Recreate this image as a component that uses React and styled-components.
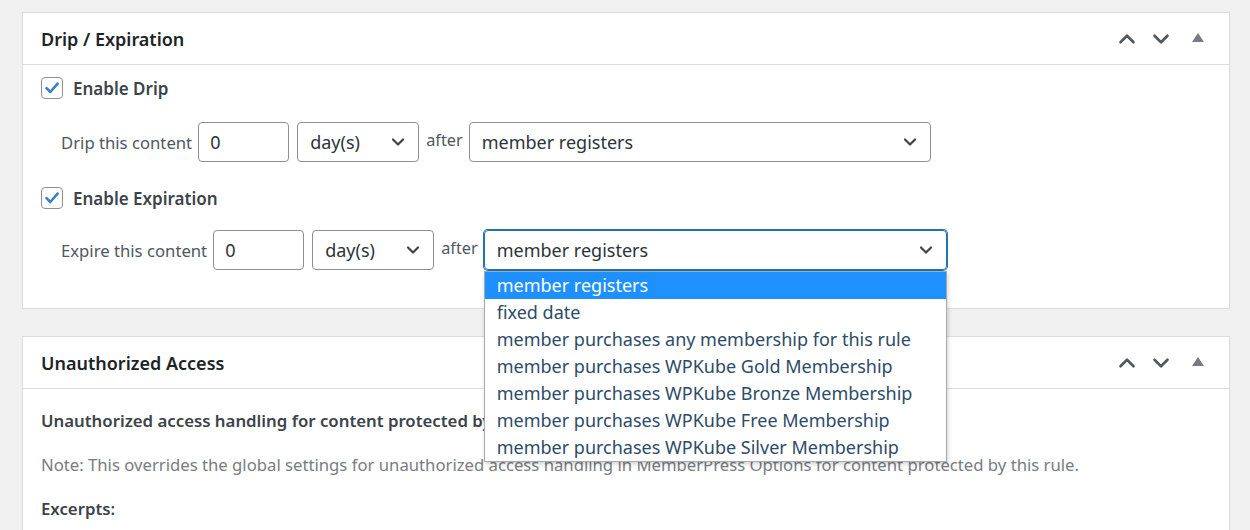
import React from 'react'
import styled, { createGlobalStyle } from 'styled-components'
import { ChevronUp, ChevronDown } from 'lucide-react'

const Global = createGlobalStyle`
  body {
    margin: 0;
    background: #f0f0f1;
    font-family: "Noto Sans", "Open Sans", sans-serif;
    color: #3c434a;
  }
`

const options = [
  'member registers',
  'fixed date',
  'member purchases any membership for this rule',
  'member purchases WPKube Gold Membership',
  'member purchases WPKube Bronze Membership',
  'member purchases WPKube Free Membership',
  'member purchases WPKube Silver Membership',
]

const Check = () => (
  <CheckBox>
    <svg width="16" height="16" viewBox="0 0 16 16">
      <path d="M2.5 8.2 L6.3 12 L13.6 3.6" fill="none" stroke="#3582c4" strokeWidth="2.6" strokeLinecap="round" strokeLinejoin="round" />
    </svg>
  </CheckBox>
)

const Select = ({ value, width, focused, children }) => (
  <SelectBox $width={width} $focused={focused}>
    <span>{value}</span>
    <ChevronDown size={20} strokeWidth={2.6} color="#3c434a" />
    {children}
  </SelectBox>
)

const Header = ({ title }) => (
  <PanelHeader>
    <Title>{title}</Title>
    <Controls>
      <IconBtn><ChevronUp size={26} strokeWidth={2.4} color="#50575e" /></IconBtn>
      <IconBtn><ChevronDown size={26} strokeWidth={2.4} color="#50575e" /></IconBtn>
      <Toggle />
    </Controls>
  </PanelHeader>
)

const App = () => {
  return (
    <>
      <Global />
      <Page>
        <Panel>
          <Header title="Drip / Expiration" />
          <Body>
            <CheckRow>
              <Check />
              <CheckLabel>Enable Drip</CheckLabel>
            </CheckRow>
            <FieldRow>
              <FieldLabel>Drip this content</FieldLabel>
              <NumInput>0</NumInput>
              <Select value="day(s)" width={122} />
              <After>after</After>
              <Select value="member registers" width={462} />
            </FieldRow>
            <CheckRow $top={25}>
              <Check />
              <CheckLabel>Enable Expiration</CheckLabel>
            </CheckRow>
            <FieldRow $top={21}>
              <FieldLabel>Expire this content</FieldLabel>
              <NumInput>0</NumInput>
              <Select value="day(s)" width={122} />
              <After>after</After>
              <Select value="member registers" width={463} focused>
                <DropList>
                  {options.map((o, i) => (
                    <Option key={o} $active={i === 0}>{o}</Option>
                  ))}
                </DropList>
              </Select>
            </FieldRow>
          </Body>
        </Panel>
        <Panel>
          <Header title="Unauthorized Access" />
          <Body2>
            <Strong>Unauthorized access handling for content protected by this rule</Strong>
            <Note>Note: This overrides the global settings for unauthorized access handling in MemberPress Options for content protected by this rule.</Note>
            <Strong>Excerpts:</Strong>
          </Body2>
        </Panel>
      </Page>
    </>
  )
}

export default App

const Page = styled.div`
  padding: 12px 20px 0 22px;
  height: 518px;
  overflow: hidden;
`
const Panel = styled.div`
  background: #fff;
  border: 1px solid #dcdcde;
  margin-bottom: 27px;
`
const PanelHeader = styled.div`
  height: 51px;
  border-bottom: 1px solid #dcdcde;
  display: flex;
  align-items: center;
  justify-content: space-between;
  padding: 0 18px;
`
const Title = styled.div`
  font-size: 18px;
  font-weight: 600;
  color: #1d2327;
`
const Controls = styled.div`
  display: flex;
  align-items: center;
  gap: 8px;
  margin-right: -2px;
`
const IconBtn = styled.div`
  width: 26px;
  height: 26px;
  display: flex;
  align-items: center;
  justify-content: center;
`
const Toggle = styled.div`
  width: 0;
  height: 0;
  margin: 0 9px 2px 10px;
  border-left: 6px solid transparent;
  border-right: 6px solid transparent;
  border-bottom: 9px solid #787c82;
`
const Body = styled.div`
  padding: 12px 18px 38px;
`
const CheckRow = styled.div`
  display: flex;
  align-items: center;
  gap: 10px;
  height: 22px;
  margin-top: ${p => p.$top || 0}px;
`
const CheckBox = styled.div`
  width: 20px;
  height: 20px;
  border: 1px solid #8c8f94;
  border-radius: 4px;
  display: flex;
  align-items: center;
  justify-content: center;
  background: #fff;
`
const CheckLabel = styled.div`
  font-size: 17px;
  font-weight: 600;
  color: #3c434a;
`
const FieldRow = styled.div`
  display: flex;
  align-items: center;
  margin-top: ${p => p.$top || 23}px;
  padding-left: 20px;
  height: 40px;
`
const FieldLabel = styled.div`
  font-size: 16.7px;
  color: #50575e;
  margin-right: 6px;
`
const NumInput = styled.div`
  box-sizing: border-box;
  width: 91px;
  height: 40px;
  border: 1px solid #8c8f94;
  border-radius: 4px;
  padding: 0 11px;
  display: flex;
  align-items: center;
  font-size: 18px;
  color: #2c3338;
  margin-right: 8px;
`
const SelectBox = styled.div`
  position: relative;
  box-sizing: border-box;
  width: ${p => p.$width}px;
  height: 40px;
  border: 1px solid ${p => (p.$focused ? '#2271b1' : '#8c8f94')};
  box-shadow: ${p => (p.$focused ? '0 0 0 1px #2271b1' : 'none')};
  border-radius: 4px;
  padding: 0 10px 0 12px;
  display: flex;
  align-items: center;
  justify-content: space-between;
  font-size: 18px;
  color: #2c3338;
`
const After = styled.div`
  font-size: 16.3px;
  color: #50575e;
  margin: -4px 6px 0 7px;
`
const DropList = styled.div`
  position: absolute;
  top: 40px;
  left: -1px;
  right: -1px;
  background: #fff;
  border: 1px solid #a7aaad;
  box-shadow: 1px 2px 4px rgba(0, 0, 0, 0.18);
  z-index: 5;
`
const Option = styled.div`
  height: 27px;
  line-height: 27px;
  padding-left: 12px;
  font-size: 18px;
  white-space: nowrap;
  background: ${p => (p.$active ? '#1e90ff' : '#fff')};
  color: ${p => (p.$active ? '#fff' : '#2d4b68')};
`
const Body2 = styled.div`
  padding: 20px 18px;
  display: flex;
  flex-direction: column;
  gap: 21px;
`
const Strong = styled.div`
  font-size: 16.8px;
  font-weight: 600;
  color: #3c434a;
  white-space: nowrap;
`
const Note = styled.div`
  font-size: 16.7px;
  color: #787c82;
  white-space: nowrap;
`
